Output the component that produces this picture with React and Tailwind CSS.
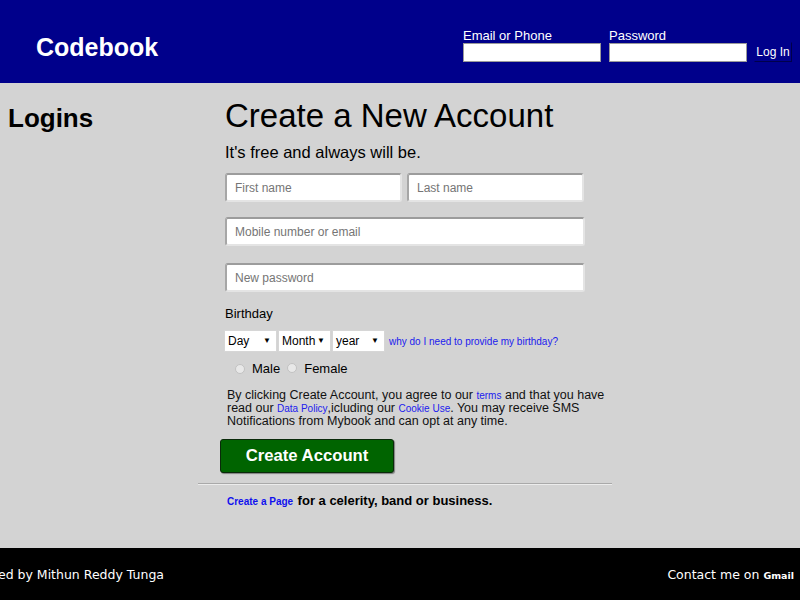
import React from "react";

const arial = { fontFamily: '"Liberation Sans", Arial, sans-serif' };

function Field({ placeholder, className }) {
  return (
    <div
      className={
        "h-[29px] bg-white rounded-[3px] border-2 border-t-[#9c9c9c] border-l-[#a6a6a6] border-r-[#e4e4e4] border-b-[#e4e4e4] flex items-center pl-[8px] text-[12px] text-[#757575] " +
        (className || "")
      }
    >
      {placeholder}
    </div>
  );
}

function Sel({ label, w }) {
  return (
    <div
      className="h-[22px] bg-white border border-[#d6d6d6] flex items-center justify-between pl-[3px] pr-[5px] text-[12px] text-black"
      style={{ width: w }}
    >
      <span>{label}</span>
      <span className="text-[8px]">▼</span>
    </div>
  );
}

function Radio() {
  return (
    <span className="inline-block w-[10px] h-[10px] rounded-full bg-[#e8e8e8] border border-[#c2c2c2]" />
  );
}

export default function App() {
  return (
    <div className="w-[800px] h-[600px] overflow-hidden bg-[#d3d3d3]" style={arial}>
      {/* Header */}
      <header className="h-[83px] bg-[#00008b] flex justify-between text-white">
        <div className="pl-[36px] pt-[32px] text-[25px] leading-[30px] font-bold">Codebook</div>
        <div className="flex items-start pt-[28px] pr-[8px]">
          <div className="flex flex-col w-[138px]">
            <span className="text-[13px] leading-[15px]">Email or Phone</span>
            <div className="h-[19px] bg-white border border-[#9a9a9a]" />
          </div>
          <div className="flex flex-col w-[138px] ml-[8px]">
            <span className="text-[13px] leading-[15px]">Password</span>
            <div className="h-[19px] bg-white border border-[#9a9a9a]" />
          </div>
          <div className="ml-[7px] mt-[14px] h-[20px] w-[38px] border border-[#00004a] border-t-[#00008b] border-l-[#00008b] flex items-center justify-center text-[12px]">
            Log In
          </div>
        </div>
      </header>

      {/* Main */}
      <main className="h-[465px] flex">
        <div className="w-[225px] pl-[8px] pt-[20px]">
          <div className="text-[26px] leading-[30px] font-bold text-black">Logins</div>
        </div>
        <div className="flex flex-col pt-[15px] text-black">
          <div className="text-[33px] leading-[36px]">Create a New Account</div>
          <div className="text-[16.5px] leading-[20px] mt-[8px]">It's free and always will be.</div>
          <div className="flex gap-[5px] mt-[11px]">
            <Field placeholder="First name" className="w-[177px]" />
            <Field placeholder="Last name" className="w-[177px]" />
          </div>
          <Field placeholder="Mobile number or email" className="w-[360px] mt-[15px]" />
          <Field placeholder="New password" className="w-[360px] mt-[17px]" />
          <div className="text-[13px] leading-[16px] mt-[14px]">Birthday</div>
          <div className="flex items-center gap-[1px] mt-[8px] ml-[-1px]">
            <Sel label="Day" w={53} />
            <Sel label="Month" w={53} />
            <Sel label="year" w={53} />
            <span className="ml-[3px] text-[10px] text-[#2020ee]">why do I need to provide my birthday?</span>
          </div>
          <div className="flex items-center mt-[9px] ml-[10px] text-[13px] leading-[16px]">
            <Radio />
            <span className="ml-[7px]">Male</span>
            <span className="ml-[7px]"><Radio /></span>
            <span className="ml-[7px]">Female</span>
          </div>
          <p className="text-[12.5px] leading-[13px] mt-[12px] ml-[2px] text-[#111]">
            By clicking Create Account, you agree to our{" "}
            <span className="text-[10px] text-[#2020ee]">terms</span> and that you have
            <br />
            read our <span className="text-[10px] text-[#2020ee]">Data Policy</span>,icluding our{" "}
            <span className="text-[10px] text-[#2020ee]">Cookie Use</span>. You may receive SMS
            <br />
            Notifications from Mybook and can opt at any time.
          </p>
          <div className="mt-[11px] ml-[-5px] w-[174px] h-[34px] bg-[#006400] rounded-[3px] border border-[#0a2a0a] shadow-[1px_1px_1px_rgba(0,0,0,0.4)] flex items-center justify-center text-white font-bold text-[16.7px]">
            Create Account
          </div>
          <div className="mt-[10px] ml-[-27px] w-[414px] border-t border-t-[#a9a9a9] border-b border-b-[#ececec]" />
          <div className="mt-[7px] ml-[2px] leading-[16px] font-bold">
            <span className="text-[10px] text-[#1010ee]">Create a Page</span>{" "}
            <span className="text-[13px]">for a celerity, band or business.</span>
          </div>
        </div>
      </main>

      {/* Footer */}
      <footer
        className="h-[52px] bg-black text-white flex items-center justify-between pt-[3px]"
        style={{ fontFamily: '"DejaVu Sans", sans-serif' }}
      >
        <div className="w-[164px] flex justify-end whitespace-nowrap text-[12.5px]">
          <span>Designed by Mithun Reddy Tunga</span>
        </div>
        <div className="pr-[6px] whitespace-nowrap text-[12.5px]">
          Contact me on <span className="text-[9.5px] font-bold">Gmail</span>
        </div>
      </footer>
    </div>
  );
}
